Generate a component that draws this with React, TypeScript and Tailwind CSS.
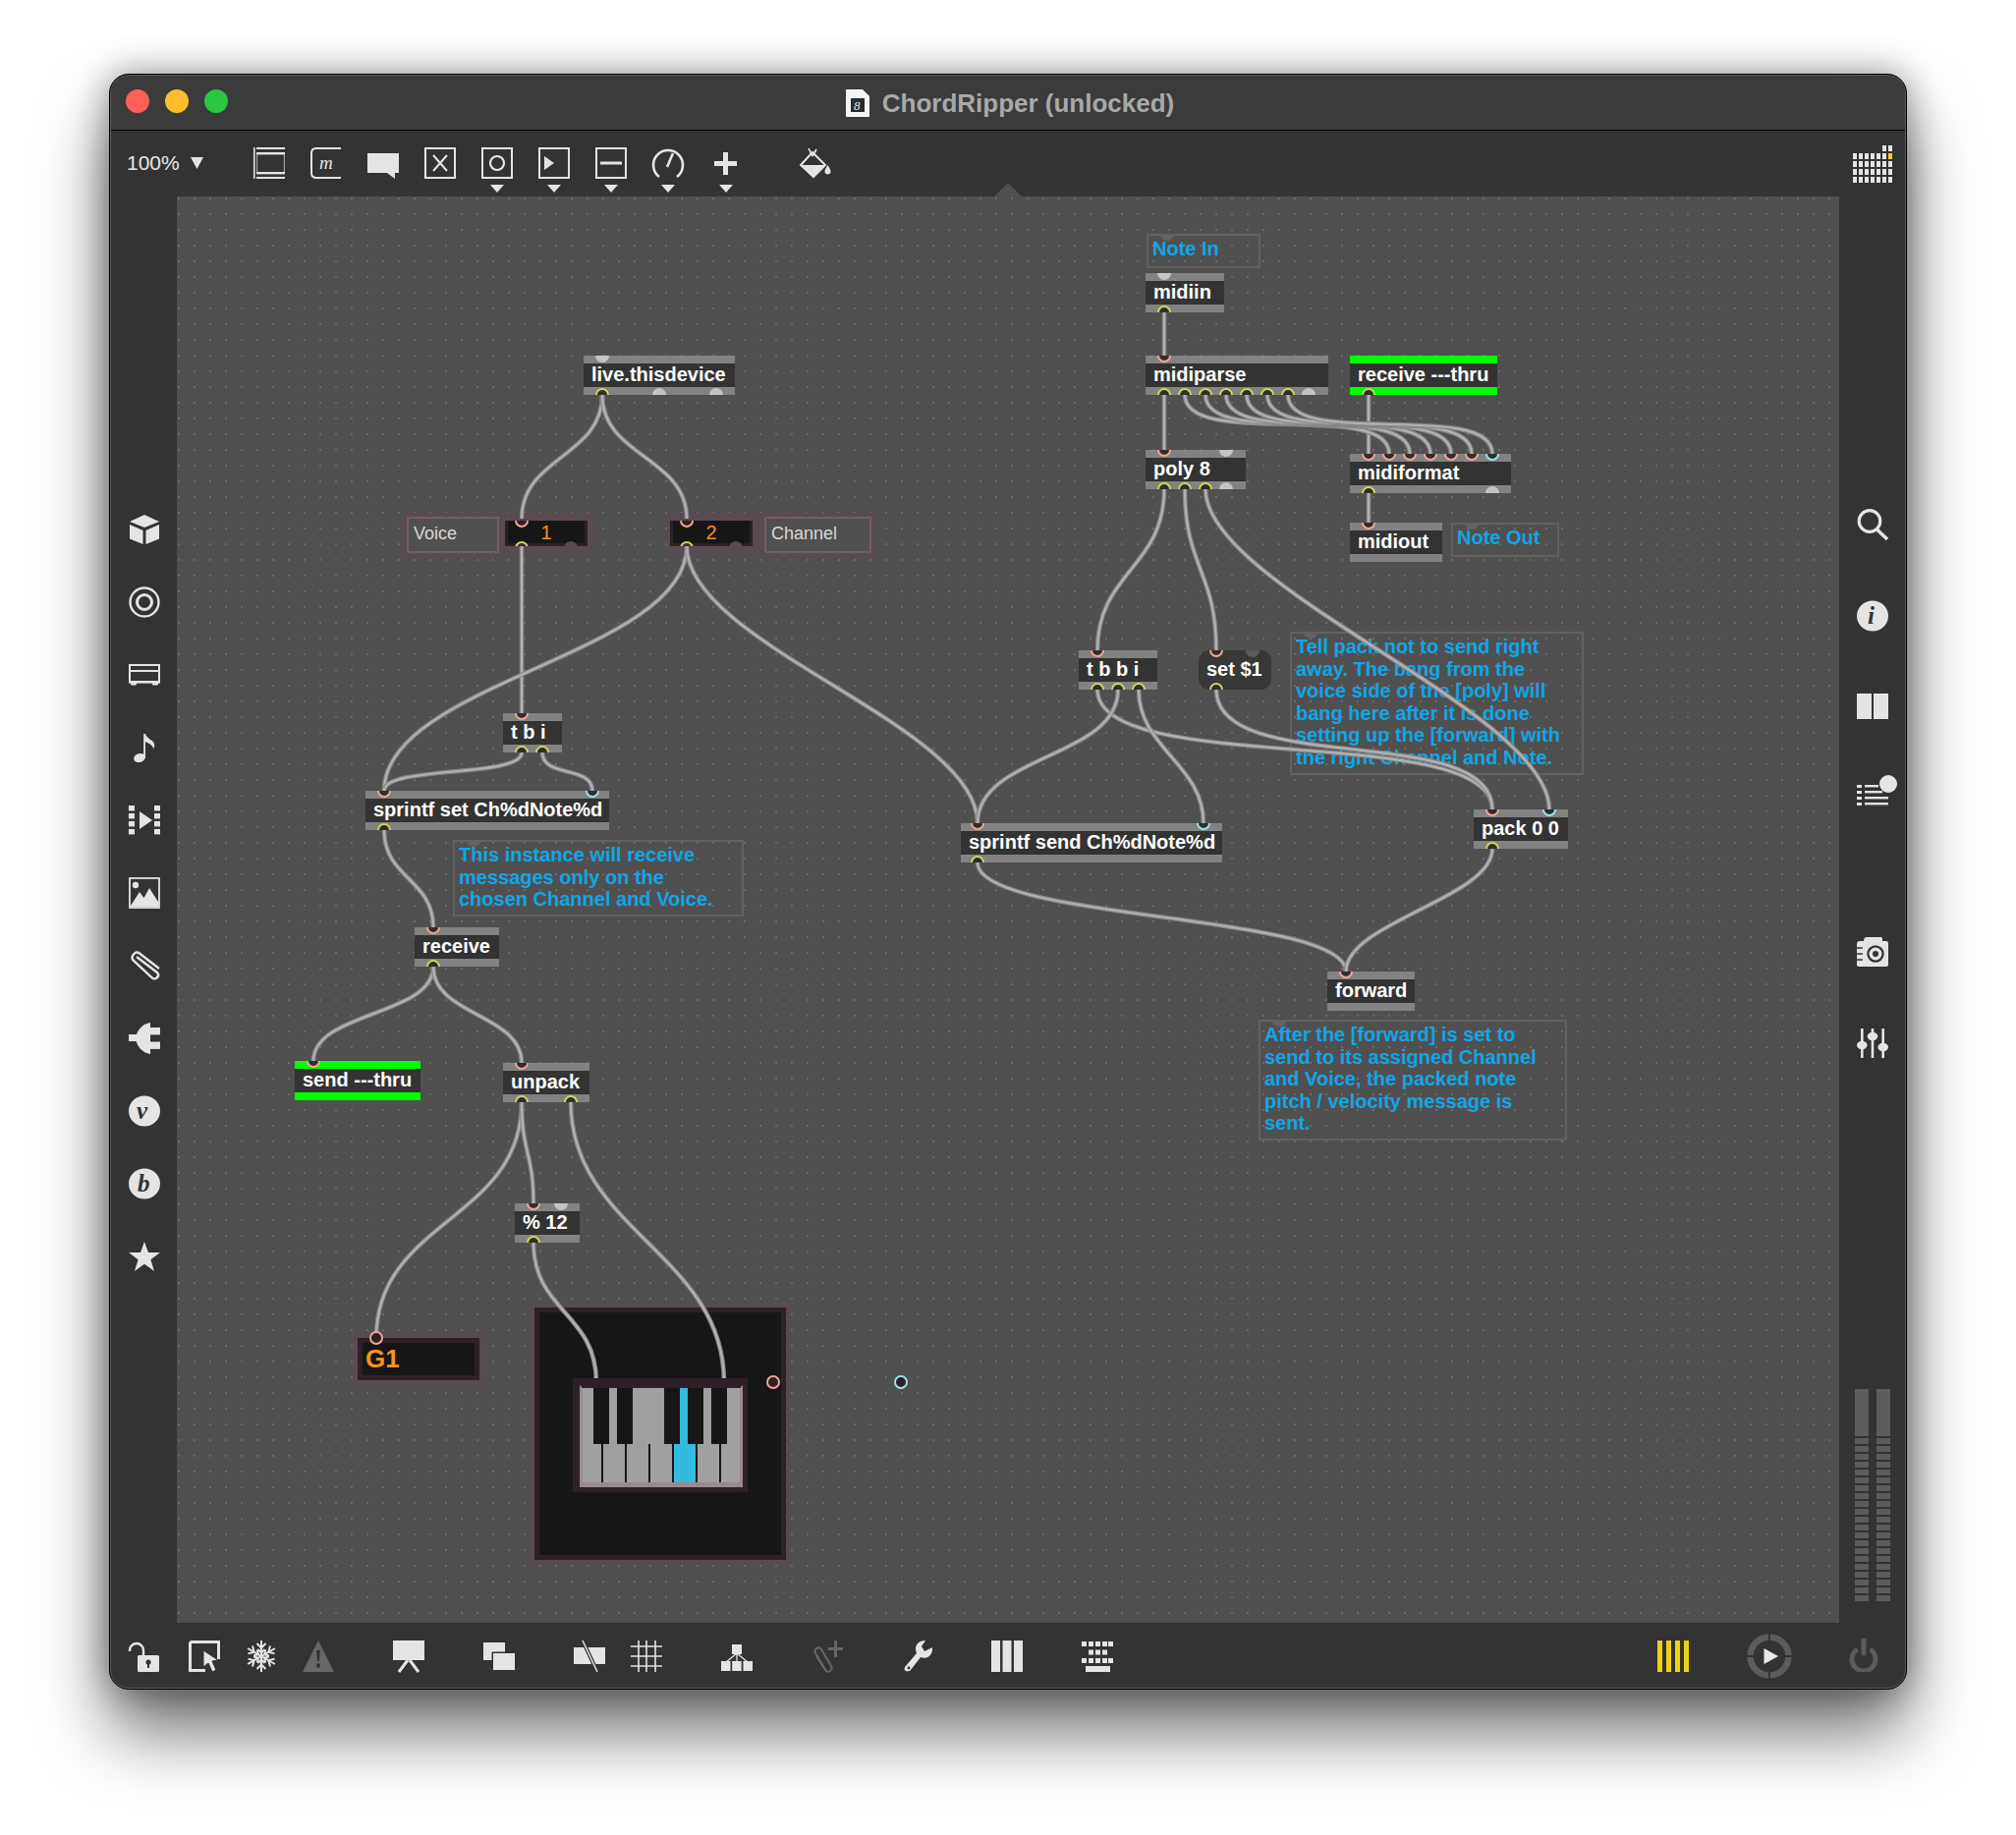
import React from "react";

const C = "#e4e4e4";
const Ic = ({ children, w = 32, h = 32 }: { children: React.ReactNode; w?: number; h?: number }) => (
  <svg width={w} height={h} viewBox={`0 0 ${w} ${h}`} fill={C} className="block overflow-visible shrink-0">
    {children}
  </svg>
);
const S = { fill: "none", stroke: C } as const;
const serif = "'Liberation Serif', serif";

/* ---------- toolbar ---------- */
const TObject = () => (
  <Ic>
    <rect x="0" y="0" width="1.6" height="32" />
    <rect x="3" y="0" width="29" height="2" />
    <rect x="3" y="5" width="29" height="2.4" />
    <rect x="3" y="25" width="29" height="2.4" />
    <rect x="3" y="30" width="29" height="2" />
    <rect x="3" y="7" width="1.2" height="18" opacity=".6" />
    <rect x="30.8" y="7" width="1.2" height="18" opacity=".6" />
  </Ic>
);
const TMessage = () => (
  <Ic>
    <path d="M31 1H6Q1 1 1 6V26Q1 31 6 31H31" {...S} strokeWidth="2" />
    <text x="9" y="22" fontFamily={serif} fontStyle="italic" fontSize="19">m</text>
  </Ic>
);
const TComment = () => (
  <Ic><path d="M0 6H32V26H28V32L20 26H0Z" /></Ic>
);
const BoxIc = ({ children }: { children: React.ReactNode }) => (
  <Ic>
    <rect x="1" y="1" width="30" height="30" {...S} strokeWidth="2" />
    {children}
  </Ic>
);
const TToggle = () => (
  <BoxIc><path d="M9 8L23 24M23 8L9 24" {...S} strokeWidth="2" /></BoxIc>
);
const TButton = () => (
  <BoxIc><circle cx="16" cy="16" r="7" {...S} strokeWidth="2.2" /></BoxIc>
);
const TPlay = () => (
  <BoxIc><path d="M6 9L16 16L6 23Z" /></BoxIc>
);
const TSlider = () => (
  <BoxIc><rect x="5" y="14.5" width="22" height="3" /></BoxIc>
);
const TDial = () => (
  <Ic>
    <path d="M7 30A15 15 0 1 1 25 30" {...S} strokeWidth="2.6" />
    <path d="M15 20L21 6" {...S} strokeWidth="2.6" />
  </Ic>
);
const TPlus = () => (
  <Ic w={23} h={23}><path d="M9 0H14V9H23V14H14V23H9V14H0V9H9Z" /></Ic>
);
const TBucket = () => (
  <Ic h={30}>
    <path d="M13 4L1 17L14 29L26 17Z" {...S} strokeWidth="2" />
    <path d="M1 17H26L14 29Z" />
    <path d="M13 8L9 0M13 8L17 1" {...S} strokeWidth="1.6" />
    <path d="M28.5 17C30 20 32 22 31.5 24.5A3.2 3.2 0 0 1 25.5 24.5C25 22 27 20 28.5 17Z" />
  </Ic>
);
const TGridMeter = () => {
  const cells: React.ReactNode[] = [];
  for (let r = 0; r < 4; r++)
    for (let c = 0; c < 7; c++)
      cells.push(<rect key={`${r}-${c}`} x={c * 6} y={8 + r * 8} width="4" height="6" fill={r === 0 && c === 6 ? "#f3cf1b" : C} />);
  return (
    <Ic w={40} h={38}>
      <rect x="30" y="0" width="4" height="6" />
      <rect x="36" y="0" width="4" height="6" />
      {cells}
    </Ic>
  );
};

/* ---------- left ---------- */
const LCube = () => (
  <Ic>
    <path d="M16 1L31 8L16 14L1 8Z" />
    <path d="M1 11L14.5 17V31L1 25.5Z" />
    <path d="M31 11L17.5 17V31L31 25.5Z" />
  </Ic>
);
const LTarget = () => (
  <Ic>
    <circle cx="16" cy="16" r="14.5" {...S} strokeWidth="2.4" />
    <circle cx="16" cy="16" r="7.5" {...S} strokeWidth="3" />
  </Ic>
);
const LRack = () => (
  <Ic>
    <rect x="1" y="6" width="30" height="17" {...S} strokeWidth="2" />
    <rect x="2" y="11" width="28" height="2" />
    <rect x="0" y="22" width="32" height="2.6" />
    <rect x="2" y="24" width="6" height="2.4" rx="1" />
    <rect x="24" y="24" width="6" height="2.4" rx="1" />
  </Ic>
);
const LNote = () => (
  <Ic>
    <ellipse cx="11" cy="26.5" rx="6" ry="4.4" transform="rotate(-18 11 26.5)" />
    <rect x="15.2" y="2" width="1.8" height="25" />
    <path d="M17 2C18 7 25 8 26 12C26.6 14.5 26 16 25 17.5C25 13.5 21 12 17 10Z" />
  </Ic>
);
const LVideo = () => (
  <Ic>
    {[1, 9, 17, 25].map((y) => (
      <g key={y}>
        <rect x="0" y={y} width="6" height="5.4" />
        <rect x="26" y={y} width="6" height="5.4" />
      </g>
    ))}
    <path d="M11 7L24 16L11 25Z" />
  </Ic>
);
const LImage = () => (
  <Ic>
    <rect x="1" y="1" width="30" height="30" {...S} strokeWidth="1.8" />
    <ellipse cx="7" cy="8" rx="3.2" ry="3.2" />
    <path d="M2 29L11 15L15.5 21L21 11L30 25V30H2Z" />
  </Ic>
);
const Clip = ({ color = C }: { color?: string }) => (
  <path d="M8 6L29 22C32.5 25.5 27 30.5 24 27.5L5 10C1 5.5 7 -0.5 11 2.5L31 18" transform="translate(0 1)" fill="none" stroke={color} strokeWidth="2.4" />
);
const LClip = () => (
  <Ic><Clip /></Ic>
);
const LPlug = () => (
  <Ic>
    <rect x="0" y="12" width="8" height="7" />
    <path d="M7 16C8 8 14 1 22 0V32C14 31 8 24 7 16Z" />
    <rect x="21" y="5" width="11" height="7.4" />
    <rect x="21" y="19.5" width="11" height="7.4" />
  </Ic>
);
const Oval = ({ ch, x = 10 }: { ch: string; x?: number }) => (
  <Ic>
    <ellipse cx="16" cy="16" rx="16" ry="15.5" />
    <text x={x} y="24" fontFamily={serif} fontStyle="italic" fontWeight="700" fontSize="25" fill="#333">{ch}</text>
  </Ic>
);
const LStar = () => (
  <Ic><path d="M16 1L20 12H32L22.4 19.2L26 31L16 23.8L6 31L9.6 19.2L0 12H12Z" /></Ic>
);

/* ---------- right ---------- */
const RSearch = () => (
  <Ic>
    <circle cx="13" cy="12.5" r="10.8" {...S} strokeWidth="3.2" />
    <path d="M20.5 21L31 31" {...S} strokeWidth="3.6" />
  </Ic>
);
const RSplit = () => (
  <Ic>
    <rect x="0" y="3" width="15" height="26" />
    <rect x="17" y="3" width="15" height="26" />
  </Ic>
);
const RList = () => (
  <Ic w={42} h={34}>
    {[10, 16, 22, 28].map((y) => (
      <rect key={y} x="0" y={y} width="5" height="3" />
    ))}
    <rect x="8" y="10" width="14" height="2.4" />
    <rect x="8" y="16" width="18" height="2.4" />
    <rect x="8" y="22" width="24" height="2.4" />
    <rect x="8" y="28" width="24" height="2.4" />
    <ellipse cx="32" cy="9" rx="9" ry="9" />
  </Ic>
);
const RCamera = () => (
  <Ic>
    <path d="M7 5Q7 1 10 1H25Q26 1 26 5H30Q32 5 32 8V29Q32 31 29 31H3Q0 31 0 29V8Q0 5 3 5Z" />
    <circle cx="19" cy="18" r="7.6" fill="none" stroke="#333" strokeWidth="2.2" />
    <circle cx="19" cy="18" r="3" fill="#333" />
    <path d="M0 12H6M0 18H6M0 24H6" stroke="#333" strokeWidth="1.4" />
  </Ic>
);
const RSliders = () => (
  <Ic>
    <rect x="4" y="1" width="2.6" height="30" />
    <rect x="14.7" y="1" width="2.6" height="30" />
    <rect x="25.4" y="1" width="2.6" height="30" />
    <ellipse cx="5.3" cy="18" rx="5.3" ry="4.2" />
    <ellipse cx="16" cy="9" rx="5.3" ry="4.2" />
    <ellipse cx="26.7" cy="20" rx="5.3" ry="4.2" />
  </Ic>
);

/* ---------- bottom ---------- */
const BLock = () => (
  <Ic>
    <path d="M2 11V10A7 7 0 0 1 16 10V16" {...S} strokeWidth="2.4" />
    <rect x="10" y="15" width="22" height="17" rx="1.5" />
    <circle cx="21" cy="22" r="2.6" fill="#333" />
    <rect x="20" y="22" width="2" height="6" fill="#333" />
  </Ic>
);
const BSelect = () => (
  <Ic>
    <path d="M1.5 1.5H30.5V19M17 30.5H1.5V1.5" {...S} strokeWidth="3" />
    <path d="M15 10L15 27L20 23L24 32L28 30L24 21L30 20Z" stroke="#333" strokeWidth="1" />
  </Ic>
);
const BSnow = () => (
  <Ic>
    <g {...S} strokeWidth="2">
      {[0, 60, 120].map((a) => (
        <g key={a} transform={`rotate(${a} 16 16)`}>
          <path d="M16 0V32" />
          <path d="M11.5 3L16 7.5L20.5 3M11.5 29L16 24.5L20.5 29M12.5 9L16 12.5L19.5 9M12.5 23L16 19.5L19.5 23" />
        </g>
      ))}
    </g>
  </Ic>
);
const BWarn = () => (
  <Ic>
    <path d="M16 0L32 32H0Z" fill="#676767" />
    <path d="M14 10H18L17 21H15Z" fill="#333" />
    <ellipse cx="16" cy="25.5" rx="2" ry="2.4" fill="#333" />
  </Ic>
);
const BPresent = () => (
  <Ic>
    <rect x="0" y="0" width="32" height="20" />
    <path d="M15 20L6 32M17 20L26 32" {...S} strokeWidth="3" />
  </Ic>
);
const BLayers = () => (
  <Ic>
    <rect x="0" y="2" width="22" height="18" />
    <rect x="8.5" y="11.5" width="25" height="19.5" fill="#333" />
    <rect x="10" y="13" width="22" height="17" />
  </Ic>
);
const BMute = () => (
  <Ic>
    <rect x="0" y="7" width="32" height="17" />
    <path d="M9 0L24 32" stroke="#333" strokeWidth="4" />
    <path d="M9 0L24 32" {...S} strokeWidth="1.5" />
  </Ic>
);
const BGrid = () => (
  <Ic>
    <path d="M8 0V32M16 0V32M25 0V32M0 6H32M0 16H32M0 26H32" {...S} strokeWidth="1.6" />
  </Ic>
);
const BTree = () => (
  <Ic>
    <rect x="11" y="4" width="10" height="10" />
    <rect x="0" y="21" width="9.5" height="10" />
    <rect x="11.2" y="21" width="9.5" height="10" />
    <rect x="22.5" y="21" width="9.5" height="10" />
    <path d="M16 13L5 22M16 13V22M16 13L27 22" {...S} strokeWidth="1.3" />
  </Ic>
);
const BClipPlus = () => (
  <Ic>
    <path d="M3 16L12 30C15 34 20 30 18 26L8 9C5 5 0 9 2 13L13 31" transform="translate(2 0)" fill="none" stroke="#676767" strokeWidth="2" />
    <path d="M23 0H26V7H32V10H26V17H23V10H17V7H23Z" fill="#676767" />
  </Ic>
);
const BWrench = () => (
  <Ic>
    <path d="M2 27L14 13C11 6 15 0 23 0L19 6L22 11L30 7C31 14 25 20 18 17L8 30C5 33 0 31 2 27Z" />
    <circle cx="6" cy="28" r="1.4" fill="#333" />
  </Ic>
);
const BKeys = () => (
  <Ic>
    <rect x="0" y="0" width="9" height="32" />
    <rect x="11.5" y="0" width="9" height="32" />
    <rect x="23" y="0" width="9" height="32" />
  </Ic>
);
const BKeyboard = () => (
  <Ic>
    {[0, 7, 14, 21, 27].map((x) => <rect key={`a${x}`} x={x} y="1" width="5" height="5" />)}
    {[7, 14, 21].map((x) => <rect key={`b${x}`} x={x} y="9.5" width="5" height="5" />)}
    {[0, 7, 14, 21, 27].map((x) => <rect key={`c${x}`} x={x} y="18" width="5" height="5" />)}
    <rect x="4" y="26" width="25" height="6" />
  </Ic>
);

/* ---------- patcher ---------- */
type Port = { x: number; k: "in" | "out" | "cy" | "off" };
type Node = { x: number; y: number; w: number; t: string; green?: boolean; msg?: boolean; top: Port[]; bot: Port[] };
const p = (x: number, k: Port["k"]): Port => ({ x, k });

const nodes: Node[] = [
  { x: 594, y: 362, w: 154, t: "live.thisdevice", top: [p(613, "off")], bot: [p(613, "out"), p(671, "off"), p(729, "off")] },
  { x: 1166, y: 278, w: 80, t: "midiin", top: [p(1185, "off")], bot: [p(1185, "out")] },
  { x: 1166, y: 362, w: 186, t: "midiparse", top: [p(1185, "in")], bot: [p(1185, "out"), p(1206, "out"), p(1227, "out"), p(1248, "out"), p(1269, "out"), p(1290, "out"), p(1311, "out"), p(1332, "off")] },
  { x: 1374, y: 362, w: 150, t: "receive ---thru", green: true, top: [], bot: [p(1393, "out")] },
  { x: 1166, y: 458, w: 102, t: "poly 8", top: [p(1185, "in"), p(1248, "off")], bot: [p(1185, "out"), p(1206, "out"), p(1227, "out"), p(1248, "off")] },
  { x: 1374, y: 462, w: 164, t: "midiformat", top: [p(1393, "in"), p(1414, "in"), p(1435, "in"), p(1456, "in"), p(1477, "in"), p(1498, "in"), p(1519, "cy")], bot: [p(1393, "out"), p(1519, "off")] },
  { x: 1374, y: 532, w: 94, t: "midiout", top: [p(1393, "in")], bot: [] },
  { x: 512, y: 726, w: 60, t: "t b i", top: [p(531, "in")], bot: [p(531, "out"), p(552, "out")] },
  { x: 372, y: 805, w: 248, t: "sprintf set Ch%dNote%d", top: [p(391, "in"), p(603, "cy")], bot: [p(391, "out")] },
  { x: 422, y: 944, w: 86, t: "receive", top: [p(441, "in")], bot: [p(441, "out")] },
  { x: 300, y: 1080, w: 128, t: "send ---thru", green: true, top: [p(319, "in")], bot: [] },
  { x: 512, y: 1082, w: 88, t: "unpack", top: [p(531, "in")], bot: [p(531, "out"), p(581, "out")] },
  { x: 524, y: 1225, w: 66, t: "% 12", top: [p(543, "in"), p(571, "off")], bot: [p(543, "out")] },
  { x: 1098, y: 662, w: 80, t: "t b b i", top: [p(1117, "in")], bot: [p(1117, "out"), p(1138, "out"), p(1159, "out")] },
  { x: 1220, y: 662, w: 74, t: "set $1", msg: true, top: [p(1238, "in"), p(1275, "off")], bot: [p(1238, "out")] },
  { x: 978, y: 838, w: 266, t: "sprintf send Ch%dNote%d", top: [p(995, "in"), p(1225, "cy")], bot: [p(995, "out")] },
  { x: 1500, y: 824, w: 96, t: "pack 0 0", top: [p(1519, "in"), p(1577, "cy")], bot: [p(1519, "out")] },
  { x: 1351, y: 989, w: 89, t: "forward", top: [p(1370, "in")], bot: [] },
];

type W = [number, number, number, number, number?];
const wires: W[] = [
  [613, 402, 531, 528], [613, 402, 699, 528],
  [531, 556, 531, 726],
  [699, 556, 391, 805, 110], [699, 556, 995, 838, 100],
  [531, 766, 391, 805, 26], [552, 766, 603, 805, 26],
  [391, 845, 441, 944], [441, 984, 319, 1080, 50], [441, 984, 531, 1082, 50],
  [531, 1122, 383, 1362, 120], [531, 1122, 543, 1225], [581, 1122, 737, 1407, 130], [543, 1265, 607, 1407, 70],
  [1185, 318, 1185, 362], [1185, 402, 1185, 458], [1393, 402, 1393, 462], [1393, 502, 1393, 532],
  [1206, 402, 1414, 462, 56], [1227, 402, 1435, 462, 56], [1248, 402, 1456, 462, 56], [1269, 402, 1477, 462, 56], [1290, 402, 1498, 462, 56], [1311, 402, 1519, 462, 56],
  [1185, 498, 1117, 662, 80], [1206, 498, 1238, 662, 80], [1227, 498, 1577, 824, 100],
  [1117, 702, 1519, 824, 90], [1138, 702, 995, 838, 70], [1159, 702, 1225, 838, 60], [1238, 702, 1519, 824, 90],
  [995, 878, 1370, 989, 60], [1519, 864, 1370, 989, 50],
];
const wirePath = ([a, b, c, d, k]: W) => {
  const o = k ?? Math.max((d - b) * 0.5, 10);
  return `M${a} ${b}C${a} ${b + o} ${c} ${d - o} ${c} ${d}`;
};

const portCls: Record<Port["k"], string> = {
  in: "bg-[#2f2f2f] border-2 border-[#f3a493]",
  out: "bg-[#2f2f2f] border-2 border-[#d4d45c]",
  cy: "bg-[#2f2f2f] border-2 border-[#9be0ee]",
  off: "bg-[#c4c4c4]",
};

const Obj = ({ n }: { n: Node }) => {
  const strip = n.msg ? "" : n.green ? "bg-[#00ff00]" : "bg-[#828282]";
  return (
    <div
      className={`absolute h-[40px] overflow-hidden flex flex-col ${n.msg ? "rounded-[10px] bg-[#383838]" : ""}`}
      style={{ left: n.x - 180, top: n.y - 200, width: n.w }}
    >
      <div className={`h-[8px] ${strip}`} />
      <div className={`h-[24px] ${n.msg ? "" : "bg-[#333333]"} px-[8px] text-[20px] leading-[23px] font-bold text-white whitespace-nowrap`}>{n.t}</div>
      <div className={`h-[8px] ${strip}`} />
      {n.top.map((q) => (
        <span
          key={`t${q.x}`}
          className={`absolute top-[-7px] size-[14px] rounded-full ${n.msg && q.k === "off" ? "bg-[#5c5c5c]" : portCls[q.k]}`}
          style={{ left: q.x - n.x - 7 }}
        />
      ))}
      {n.bot.map((q) => (
        <span
          key={`b${q.x}`}
          className={`absolute bottom-[-7px] size-[14px] rounded-full ${portCls[q.k]}`}
          style={{ left: q.x - n.x - 7 }}
        />
      ))}
    </div>
  );
};

const Note = ({ x, y, w, h, lines }: { x: number; y: number; w: number; h: number; lines: string[] }) => (
  <div
    className="absolute border-2 border-[#626262] overflow-hidden px-[4px] pt-[2px] text-[20px] leading-[22.5px] font-bold text-[#12a4e6] whitespace-nowrap"
    style={{ left: x - 180, top: y - 200, width: w, height: h }}
  >
    <span className="absolute left-[12px] top-[-9px] size-[14px] rounded-full bg-[#626262]" />
    {lines.map((l) => (
      <div key={l}>{l}</div>
    ))}
  </div>
);

const Label = ({ x, w, t }: { x: number; w: number; t: string }) => (
  <div
    className="absolute top-[322px] h-[45px] bg-[#5a4a52] p-[4px_5px]"
    style={{ left: x - 180, width: w }}
  >
    <div className="relative h-[37px] overflow-hidden border-2 border-[#705f67] bg-[#505050] pl-[5px] text-[18px] leading-[31px] text-[#d8d8d8]">
      <span className="absolute left-[9px] top-[-8px] size-[14px] rounded-full bg-[#5a4a52]" />
      <span className="relative">{t}</span>
    </div>
  </div>
);

const NumBox = ({ x, w, inX, offX, t }: { x: number; w: number; inX: number; offX: number; t: string }) => (
  <div className="absolute top-[322px] h-[41px] bg-[#5a4a52] pt-[8px] pl-[2px]" style={{ left: x - 180, width: w }}>
    <div className="relative h-[26px] w-[84px] overflow-hidden bg-[#2e2028] px-[3px]">
      <div className="h-[23px] bg-[#161616] text-center text-[20px] leading-[24px] text-[#f7931e]">{t}</div>
      <span className="absolute top-[-3px] size-[14px] rounded-full border-2 border-[#f3a493] bg-[#2e2028] mt-[-4px]" style={{ left: inX - x - 9 }} />
      <span className="absolute bottom-[-9px] size-[14px] rounded-full border-2 border-[#d4d45c] bg-[#3a3036]" style={{ left: inX - x - 9 }} />
      <span className="absolute bottom-[-9px] size-[14px] rounded-full bg-[#5a4a52]" style={{ left: offX - x - 9 }} />
    </div>
  </div>
);

const Meter = () => (
  <div className="flex w-[14px] flex-col gap-[2px]">
    <div className="h-[48px] bg-[#5c5c5c]" />
    {Array.from({ length: 21 }).map((_, i) => (
      <div key={i} className="h-[6px] bg-[#5c5c5c]" />
    ))}
  </div>
);

const DownTri = () => (
  <svg width="14" height="8" viewBox="0 0 14 8" className="block"><path d="M0 0H14L7 8Z" fill={C} /></svg>
);

export default function App() {
  return (
    <div className="relative h-[1868px] w-[2052px] overflow-hidden bg-white pl-[111px] pt-[75px] font-['Liberation_Sans',Arial,sans-serif]">
      <div className="h-[1645px] w-[1830px] overflow-hidden rounded-[20px] border border-black bg-[#333333] shadow-[0_44px_70px_rgba(0,0,0,0.55),0_0_36px_rgba(0,0,0,0.4)]">
        <div className="flex h-full flex-col overflow-hidden rounded-[19px] border border-[#5c5c5c]">
          {/* title bar */}
          <div className="relative flex h-[56px] shrink-0 items-center justify-center border-b border-black bg-[#3b3b3b]">
            <div className="absolute left-[15px] top-[14px] flex gap-[16px]">
              <span className="size-[24px] rounded-full bg-[#ff5f57]" />
              <span className="size-[24px] rounded-full bg-[#febc2e]" />
              <span className="size-[24px] rounded-full bg-[#28c840]" />
            </div>
            <div className="ml-[4px] flex items-center gap-[13px]">
              <svg width="24" height="28" viewBox="0 0 24 28" className="block">
                <path d="M1 0H17L24 7V27Q24 28 23 28H1Q0 28 0 27V1Q0 0 1 0Z" fill="#f4f4f4" />
                <rect x="5" y="9" width="14" height="14" fill="#2c2c2c" />
                <text x="8" y="21" fontSize="13" fontFamily={serif} fontStyle="italic" fill="#d8f0f4">8</text>
              </svg>
              <span className="text-[26px] font-bold leading-none text-[#a9a9a9]">ChordRipper (unlocked)</span>
            </div>
          </div>

          {/* toolbar */}
          <div className="relative flex h-[67px] shrink-0 items-start bg-[#333333]">
            <div className="ml-[16px] mt-[20px] flex w-[129px] items-center">
              <span className="w-[65px] text-[21px] leading-[26px] text-[#e8e8e8]">100%</span>
              <svg width="13" height="12" viewBox="0 0 13 12"><path d="M0 0H13L6.5 12Z" fill={C} /></svg>
            </div>
            <div className="mt-[17px] flex">
              <TObject />
              <div className="ml-[26px]"><TMessage /></div>
              <div className="ml-[26px]"><TComment /></div>
              <div className="ml-[26px]"><TToggle /></div>
              <div className="ml-[26px] flex flex-col items-center gap-[6px]"><TButton /><DownTri /></div>
              <div className="ml-[26px] flex flex-col items-center gap-[6px]"><TPlay /><DownTri /></div>
              <div className="ml-[26px] flex flex-col items-center gap-[6px]"><TSlider /><DownTri /></div>
              <div className="ml-[26px] flex flex-col items-center gap-[6px]"><TDial /><DownTri /></div>
              <div className="ml-[31px] flex w-[23px] flex-col items-center gap-[6px]"><div className="mt-[5px] mb-[4px]"><TPlus /></div><DownTri /></div>
              <div className="ml-[64px] mt-[1px]"><TBucket /></div>
            </div>
            <svg width="28" height="14" viewBox="0 0 28 14" className="absolute bottom-0 left-[899px] block"><path d="M0 14L14 0L28 14Z" fill="#505050" /></svg>
            <div className="absolute right-[13px] top-[15px]"><TGridMeter /></div>
          </div>

          {/* middle */}
          <div className="flex h-[1452px] shrink-0">
            <div className="flex w-[67px] shrink-0 flex-col items-center gap-[42px] pt-[323px] pl-[0px]">
              <LCube /><LTarget /><LRack /><LNote /><LVideo /><LImage /><LClip /><LPlug />
              <Oval ch="v" x={8} /><Oval ch="b" x={9} /><LStar />
            </div>

            {/* canvas */}
            <div className="relative w-[1692px] shrink-0 overflow-hidden bg-[#505050] bg-[radial-gradient(circle_at_2px_2px,#6c6c6c_1.1px,transparent_1.2px)] bg-[length:16px_16px]">
              <Note x={1167} y={238} w={116} h={35} lines={["Note In"]} />
              <Note x={1477} y={532} w={110} h={35} lines={["Note Out"]} />
              <Note x={1313} y={643} w={299} h={146} lines={["Tell pack not to send right", "away. The bang from the", "voice side of the [poly] will", "bang here after it is done", "setting up the [forward] with", "the right Channel and Note."]} />
              <Note x={461} y={855} w={296} h={78} lines={["This instance will receive", "messages only on the", "chosen Channel and Voice."]} />
              <Note x={1281} y={1038} w={314} h={123} lines={["After the [forward] is set to", "send to its assigned Channel", "and Voice, the packed note", "pitch / velocity message is", "sent."]} />

              <Label x={409} w={104} t="Voice" />
              <Label x={773} w={119} t="Channel" />
              <NumBox x={512} w={93} inX={531} offX={581} t="1" />
              <NumBox x={680} w={93} inX={699} offX={749} t="2" />

              {/* G1 number */}
              <div className="absolute left-[179px] top-[1157px] h-[53px] w-[134px] bg-[#5a4a52] p-[5px]">
                <div className="relative h-[43px] overflow-hidden border-[5px] border-[#2e2028] bg-[#161616] pl-[3px] text-[26px] font-bold leading-[32px] text-[#f7931e]">
                  G1
                  <span className="absolute left-[7px] bottom-[-15px] size-[14px] rounded-full bg-[#5a4a52]" />
                  <span className="absolute left-[93px] bottom-[-15px] size-[14px] rounded-full bg-[#5a4a52]" />
                </div>
              </div>

              {/* keyboard panel */}
              <div className="absolute left-[360px] top-[1127px] h-[266px] w-[265px] bg-[#5a4a52] p-[4px_5px_5px_4px]">
                <div className="h-full border-[5px] border-[#2e2028] bg-[#161616]" />
              </div>

              <svg className="absolute inset-0 block" width="1692" height="1452" viewBox="180 200 1692 1452" fill="none">
                {wires.map((w, i) => (
                  <g key={i}>
                    <path d={wirePath(w)} stroke="#868686" strokeWidth="4.6" />
                    <path d={wirePath(w)} stroke="#b2b2b2" strokeWidth="2.2" />
                  </g>
                ))}
              </svg>

              {/* keyboard */}
              <div className="absolute left-[403px] top-[1203px] h-[116px] w-[178px] bg-[#2e2028] px-[7px] pt-[7px]">
                <div className="relative h-[104px] w-[166px] overflow-hidden bg-[#161616]">
                  <div className="flex h-full gap-[2px]">
                    {[0, 1, 2, 3, 4, 5, 6].map((k) => (
                      <div key={k} className={`h-full w-[22px] ${k === 4 ? "bg-[#33bbdd]" : "bg-[#a0a0a0]"}`} />
                    ))}
                  </div>
                  <div className="absolute inset-x-[14px] top-0 h-[60px] w-[136px]">
                    <div className="absolute left-0 h-full w-[16px] bg-[#161616]" />
                    <div className="absolute left-[24px] h-full w-[16px] bg-[#161616]" />
                    <div className="absolute left-[56px] h-full w-[16px] bg-[#a0a0a0]" />
                    <div className="absolute left-[72px] h-full w-[16px] bg-[#161616]" />
                    <div className="absolute left-[88px] h-full w-[8px] bg-[#33bbdd]" />
                    <div className="absolute left-[96px] h-full w-[16px] bg-[#161616]" />
                    <div className="absolute left-[112px] h-full w-[8px] bg-[#a0a0a0]" />
                    <div className="absolute left-[120px] h-full w-[16px] bg-[#161616]" />
                  </div>
                  <div className="absolute inset-0 border-x-[3px] border-t-[3px] border-b-[5px] border-x-[#9a8890] border-b-[#9a8890] border-t-[#2e2028] bg-transparent" />
                </div>
                <span className="absolute left-[197px] top-[-3px] h-[14px] w-[14px] rounded-full border-2 border-[#f3a493] bg-[#2e2028]" />
                <span className="absolute left-[327px] top-[-3px] h-[14px] w-[14px] rounded-full border-2 border-[#9be0ee] bg-[#2e2028]" />
              </div>

              {/* inlet of the number G1 */}
              <span className="absolute left-[196px] top-[1155px] size-[14px] rounded-full border-2 border-[#f3a493] bg-[#2e2028]" />

              {nodes.map((n) => (
                <Obj key={n.t} n={n} />
              ))}
            </div>

            <div className="flex w-[67px] shrink-0 flex-col items-center pt-[318px]">
              <RSearch />
              <div className="mt-[61px]"><Oval ch="i" x={11} /></div>
              <div className="mt-[60px]"><RSplit /></div>
              <div className="ml-[10px] mt-[54px]"><RList /></div>
              <div className="mt-[130px]"><RCamera /></div>
              <div className="mt-[61px]"><RSliders /></div>
              <div className="mt-[336px] flex gap-[8px]"><Meter /><Meter /></div>
            </div>
          </div>

          {/* bottom bar */}
          <div className="flex h-[66px] shrink-0 items-start pt-[18px]">
            <div className="ml-[17px]"><BLock /></div>
            <div className="ml-[30px]"><BSelect /></div>
            <div className="ml-[26px]"><BSnow /></div>
            <div className="ml-[26px]"><BWarn /></div>
            <div className="ml-[60px]"><BPresent /></div>
            <div className="ml-[60px]"><BLayers /></div>
            <div className="ml-[60px]"><BMute /></div>
            <div className="ml-[26px]"><BGrid /></div>
            <div className="ml-[60px]"><BTree /></div>
            <div className="ml-[60px]"><BClipPlus /></div>
            <div className="ml-[61px]"><BWrench /></div>
            <div className="ml-[58px]"><BKeys /></div>
            <div className="ml-[60px]"><BKeyboard /></div>
            <div className="ml-[554px] flex h-[32px] gap-[4px]">
              <div className="h-full w-[5px] bg-[#ecd118]" />
              <div className="h-full w-[5px] bg-[#ecd118]" />
              <div className="h-full w-[5px] bg-[#ecd118]" />
              <div className="h-full w-[5px] bg-[#ecd118]" />
            </div>
            <div className="ml-[59px] mt-[-7px]">
              <svg width="46" height="46" viewBox="0 0 46 46" className="block">
                <circle cx="23" cy="23" r="19.5" fill="none" stroke="#5c5c5c" strokeWidth="6.5" />
                <path d="M23 0V46M0 23H46" stroke="#333" strokeWidth="2" />
                <path d="M17.5 15L32 23L17.5 31Z" fill="#e8e8e8" />
              </svg>
            </div>
            <div className="ml-[58px] mt-[-2px]">
              <svg width="30" height="34" viewBox="0 0 30 34" className="block" fill="none" stroke="#5c5c5c" strokeWidth="5">
                <path d="M8.5 11A12 12 0 1 0 21.5 11" />
                <path d="M15 1V15" strokeLinecap="round" />
              </svg>
            </div>
          </div>
        </div>
      </div>
    </div>
  );
}
